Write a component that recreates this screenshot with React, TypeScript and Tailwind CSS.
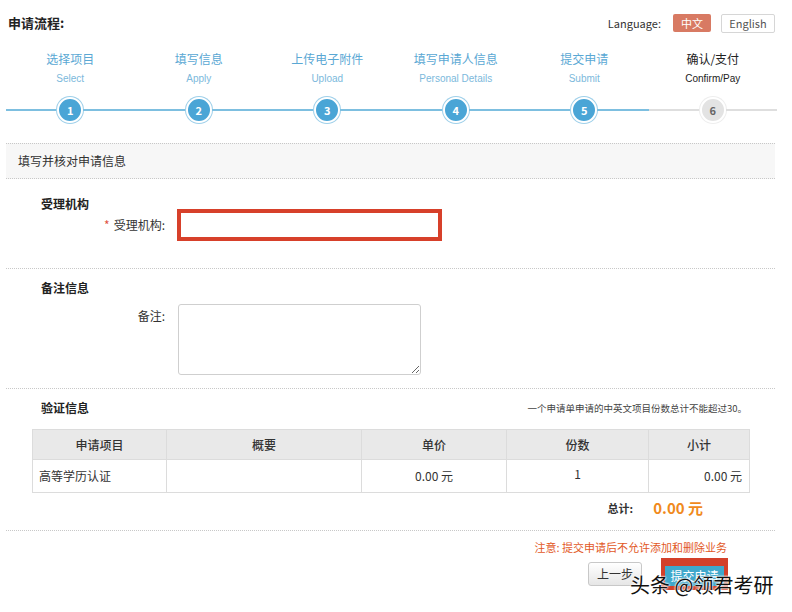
import type React from "react"

const steps = [
  { cn: "选择项目", en: "Select" },
  { cn: "填写信息", en: "Apply" },
  { cn: "上传电子附件", en: "Upload" },
  { cn: "填写申请人信息", en: "Personal Details" },
  { cn: "提交申请", en: "Submit" },
  { cn: "确认/支付", en: "Confirm/Pay" },
]

const App: React.FC = () => {
  return (
    <div
      className="relative w-[792px] h-[612px] bg-white text-[#333] overflow-hidden"
      style={{ fontFamily: '"Noto Sans CJK SC", "Noto Sans", sans-serif' }}
    >
      {/* top bar */}
      <div className="h-[46px] flex items-center justify-between pl-[8px] pr-[17px]">
        <div className="text-[13px] font-bold text-[#222]">申请流程:</div>
        <div className="flex items-center text-[11px]">
          <span className="text-[#333] mr-[12px]">Language:</span>
          <span className="w-[38px] h-[18px] flex items-center justify-center bg-[#d87a63] text-white rounded-[2px]">中文</span>
          <span className="ml-[10px] w-[54px] h-[19px] flex items-center justify-center border border-[#d6d6d6] text-[#555] rounded-[2px]">English</span>
        </div>
      </div>

      {/* steps */}
      <div className="ml-[6px] w-[771px] flex">
        {steps.map((s, i) => {
          const done = i < 5
          return (
            <div key={i} className="flex-1 flex flex-col items-center">
              <div className={`mt-[5px] h-[16px] leading-[16px] text-[12px] ${done ? "text-[#5aa8d4]" : "text-[#222]"}`}>{s.cn}</div>
              <div
                className={`mt-[5px] h-[14px] leading-[14px] text-[10px] ${done ? "text-[#7cb9dc]" : "text-[#222]"}`}
                style={{ fontFamily: '"Liberation Sans", sans-serif' }}
              >
                {s.en}
              </div>
              <div className="mt-[11px] w-full flex items-center">
                <div className={`flex-1 h-[2px] ${done ? "bg-[#7dbfe0]" : "bg-[#dedede]"}`} />
                <div
                  className={`w-[26px] h-[26px] rounded-full flex items-center justify-center text-[11px] font-bold border-2 border-white ${
                    done ? "bg-[#4aa5d6] text-white ring-1 ring-[#9fd0ea]" : "bg-[#e3e3e3] text-[#666] ring-1 ring-[#eeeeee]"
                  }`}
                >
                  {i + 1}
                </div>
                <div className={`flex-1 h-[2px] ${done ? "bg-[#7dbfe0]" : "bg-[#dedede]"}`} />
              </div>
            </div>
          )
        })}
      </div>

      {/* form */}
      <div className="ml-[6px] w-[769px] mt-[20px]">
        <div className="h-[36px] bg-[#f7f7f7] border-y border-dotted border-[#c8c8c8] flex items-center pl-[12px] text-[12px] text-[#333]">
          填写并核对申请信息
        </div>

        <div className="pt-[19px] pb-[27px] border-b border-dotted border-[#c8c8c8]">
          <div className="pl-[35px] h-[12px] leading-[12px] text-[12px] font-bold text-[#222]">受理机构</div>
          <div className="flex items-center pl-[35px] mt-[-1px]">
            <div className="w-[124px] text-right text-[12px] text-[#333]">
              <span className="text-[#e0533f] mr-[4px]">*</span>受理机构:
            </div>
            <div className="ml-[12px] w-[265px] h-[32px] border-[4px] border-[#d7402a] bg-white" />
          </div>
        </div>

        <div className="pt-[13px] pb-[13px] border-b border-dotted border-[#c8c8c8]">
          <div className="pl-[35px] h-[12px] leading-[12px] text-[12px] font-bold text-[#222]">备注信息</div>
          <div className="flex items-start pl-[35px] mt-[10px]">
            <div className="w-[124px] pt-[3px] text-right text-[12px] text-[#333]">备注:</div>
            <textarea className="ml-[13px] w-[243px] h-[71px] border border-[#cfcfcf] rounded-[3px] bg-white outline-none" />
          </div>
        </div>

        <div className="pt-[12px] pb-[10px] border-b border-dotted border-[#c8c8c8]">
          <div className="flex items-center justify-between pl-[35px] pr-[28px] h-[14px]">
            <div className="text-[12px] font-bold text-[#222]">验证信息</div>
            <div className="text-[9.5px] text-[#444]">一个申请单申请的中英文项目份数总计不能超过30。</div>
          </div>
          <table className="ml-[26px] mt-[14px] w-[718px] border-collapse text-[12px]">
            <thead>
              <tr className="bg-[#e9e9e9] h-[30px]">
                <th className="w-[134px] border border-[#dcdcdc] font-medium text-[#333]">申请项目</th>
                <th className="w-[195px] border border-[#dcdcdc] font-medium text-[#333]">概要</th>
                <th className="w-[145px] border border-[#dcdcdc] font-medium text-[#333]">单价</th>
                <th className="w-[142px] border border-[#dcdcdc] font-medium text-[#333]">份数</th>
                <th className="border border-[#dcdcdc] font-medium text-[#333]">小计</th>
              </tr>
            </thead>
            <tbody>
              <tr className="h-[33px]">
                <td className="border border-[#dcdcdc] pl-[6px] text-[#333]">高等学历认证</td>
                <td className="border border-[#dcdcdc]" />
                <td className="border border-[#dcdcdc] text-center text-[#333]">0.00 元</td>
                <td className="border border-[#dcdcdc] text-center text-[#333] pb-[4px]">1</td>
                <td className="border border-[#dcdcdc] text-right pr-[7px] text-[#333]">0.00 元</td>
              </tr>
            </tbody>
          </table>
          <div className="flex items-center justify-end pr-[72px] mt-[3px] h-[24px]">
            <span className="text-[11px] font-bold text-[#333]">总计:</span>
            <span className="ml-[20px] text-[15px] font-bold text-[#f08a1c]">0.00 元</span>
          </div>
        </div>

        <div className="pt-[8px] flex flex-col items-end">
          <div className="pr-[48px] h-[16px] leading-[16px] text-[11px] text-[#e2581f]">注意: 提交申请后不允许添加和删除业务</div>
          <div className="pr-[47px] mt-[3px] flex items-center">
            <button className="w-[54px] h-[24px] rounded-[3px] border border-[#c8c8c8] bg-gradient-to-b from-white to-[#e6e6e6] text-[12px] text-[#333]">
              上一步
            </button>
            <div className="ml-[19px] border-[4px] border-[#d3402a] bg-[#d3402a]">
              <button className="w-[59px] h-[20px] bg-[#40a8cc] text-white text-[12px] leading-[20px]">提交申请</button>
            </div>
          </div>
        </div>
      </div>

      {/* watermark */}
      <div
        className="absolute left-[630px] top-[570px] text-[20px] text-[#111]"
        style={{ textShadow: "0 0 2px #fff, 0 0 2px #fff, 0 0 2px #fff" }}
      >
        头条 @领君考研
      </div>
    </div>
  )
}

export default App
